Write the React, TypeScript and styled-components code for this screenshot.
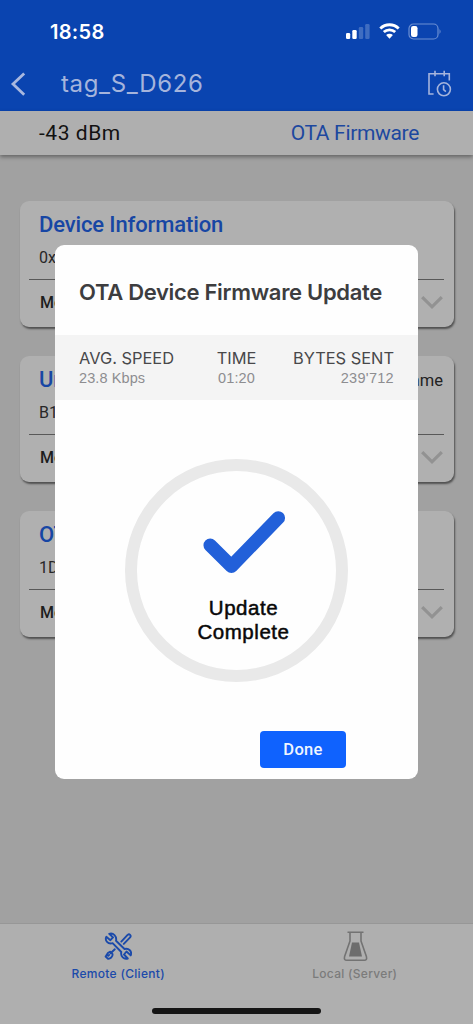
import React from 'react';
import styled, { createGlobalStyle } from 'styled-components';

const GlobalStyle = createGlobalStyle`
  *, *::before, *::after { box-sizing: border-box; }
  body { margin: 0; background: #a1a1a1; }
  svg { display: block; flex: none; }
`;

const sf = `Inter, "Liberation Sans", sans-serif`;
const roboto = `Roboto, "Liberation Sans", sans-serif`;
const helvetica = `"Liberation Sans", Arial, sans-serif`;

const Screen = styled.div`
  position: relative;
  display: flex;
  flex-direction: column;
  width: 473px;
  height: 1024px;
  overflow: hidden;
  background: #a1a1a1;
  font-family: ${roboto};
  white-space: nowrap;
`;

const Header = styled.header`
  height: 111px;
  flex: none;
  background: #0a44b0;
`;

const StatusBar = styled.div`
  display: flex;
  align-items: center;
  height: 62px;
  padding: 0 31px 0 50px;
`;

const Clock = styled.span`
  flex: 1;
  padding-top: 1px;
  font: 600 20px/24px ${sf};
  letter-spacing: 0.3px;
  color: #fff;
`;

const NavBar = styled.div`
  display: flex;
  align-items: center;
  height: 44px;
  padding: 0 21px 0 10px;
`;

const NavTitle = styled.h1`
  flex: 1;
  margin: 0 0 0 34px;
  font: 400 24px/30px ${sf};
  letter-spacing: 0.65px;
  color: #a5b4dc;
`;

const SubBar = styled.div`
  display: flex;
  align-items: center;
  justify-content: space-between;
  flex: none;
  height: 44px;
  padding: 0 54px 0 39px;
  background: #afafaf;
  box-shadow: 0 2px 4px rgba(0, 0, 0, 0.38);
`;

const SubText = styled.span<{ $link?: boolean }>`
  font-size: 21px;
  line-height: 26px;
  letter-spacing: ${p => (p.$link ? '-0.33px' : '0.55px')};
  color: ${p => (p.$link ? '#1d489f' : '#121212')};
`;

const Content = styled.main`
  display: flex;
  flex-direction: column;
  gap: 29px;
  flex: 1;
  padding: 46px 19px 0 20px;
`;

const Card = styled.section`
  display: flex;
  flex-direction: column;
  height: 126px;
  padding: 0 10px 0 9px;
  border-radius: 9px;
  background: #b0b0b0;
  box-shadow: 1px 2px 2px rgba(0, 0, 0, 0.5);
`;

const CardTop = styled.div`
  display: flex;
  justify-content: space-between;
  align-items: center;
  height: 47px;
  padding-left: 10px;
`;

const CardTitle = styled.h2`
  margin: 0;
  padding-top: 1px;
  font: 500 22px/26px ${roboto};
  letter-spacing: -0.13px;
  color: #1746a4;
`;

const CardNote = styled.span`
  font-size: 16.5px;
  line-height: 20px;
  padding: 3px 1px 0 0;
  color: #222;
`;

const CardDetail = styled.div`
  height: 32px;
  padding: 0 0 0 10px;
  border-bottom: 1px solid #585858;
  font-size: 16px;
  line-height: 20px;
  color: #272727;
`;

const CardMore = styled.div`
  display: flex;
  justify-content: space-between;
  align-items: center;
  height: 44px;
  padding: 0 1px 0 11px;
  font-size: 16px;
  font-weight: 500;
  color: #1d1d1d;
`;

const TabBar = styled.nav`
  display: flex;
  flex: none;
  height: 101px;
  border-top: 1px solid #979797;
  background: #afafaf;
`;

const Tab = styled.div<{ $active?: boolean }>`
  display: flex;
  flex-direction: column;
  align-items: center;
  gap: 5px;
  flex: 1;
  padding-top: 7px;
  font: 500 12px/16px ${sf};
  letter-spacing: 0.3px;
  color: ${p => (p.$active ? '#1b4aaa' : '#7b7b7b')};
`;

const HomeIndicator = styled.div`
  position: absolute;
  left: 152px;
  bottom: 10px;
  width: 169px;
  height: 6px;
  border-radius: 3px;
  background: #151515;
`;

const Dialog = styled.div`
  position: absolute;
  left: 55px;
  top: 245px;
  display: flex;
  flex-direction: column;
  width: 363px;
  height: 534px;
  border-radius: 9px;
  overflow: hidden;
  background: #fefefe;
`;

const DialogTitle = styled.h2`
  margin: 0;
  padding: 32px 0 28px 24px;
  font: 600 22px/30px ${sf};
  letter-spacing: -0.31px;
  color: #3d3d3f;
`;

const Stats = styled.div`
  display: flex;
  height: 65px;
  flex: none;
  padding: 13px 24px 0;
  background: #f4f4f4;
`;

const Stat = styled.div<{ $align: string }>`
  flex: 1;
  text-align: ${p => p.$align};
`;

const StatLabel = styled.div`
  font: 400 16.4px/20px ${sf};
  color: #48484a;
`;

const StatValue = styled.div<{ $spacing?: number }>`
  font: 400 14.5px/20px ${helvetica};
  letter-spacing: ${p => p.$spacing ?? 0.1}px;
  color: #8d8d90;
`;

const Ring = styled.div`
  display: flex;
  flex-direction: column;
  align-items: center;
  width: 223px;
  height: 223px;
  margin: 59px 0 0 70px;
  padding: 37px 0 0 14px;
  border: 12px solid #e9e9e9;
  border-radius: 50%;
`;

const Message = styled.p`
  margin: 22px 0 0;
  font: 400 20.5px/24px ${helvetica};
  letter-spacing: 0.55px;
  text-align: center;
  color: #080808;
  -webkit-text-stroke: 0.5px #080808;
`;

const DoneButton = styled.button`
  width: 86px;
  height: 37px;
  margin: 49px 0 0 205px;
  padding: 0;
  border: 0;
  border-radius: 4px;
  background: #0f62fe;
  font: 500 16.5px/20px ${roboto};
  letter-spacing: 0.3px;
  color: #f0f6ff;
`;

const SignalIcon = () => (
  <svg width="25" height="16" viewBox="0 0 25 16" fill="#fff">
    <rect x="0" y="10" width="4.2" height="6" rx="1.2" />
    <rect x="6.3" y="7" width="4.4" height="9" rx="1.2" />
    <rect x="12.8" y="4" width="4.4" height="12" rx="1.2" opacity=".22" />
    <rect x="19.2" y="1" width="4.4" height="15" rx="1.2" opacity=".22" />
  </svg>
);

const WifiIcon = () => (
  <svg width="21" height="16" viewBox="0 0 21 16" fill="none" stroke="#fff" strokeWidth="2.8">
    <path d="M1.3 5.5a13.2 13.2 0 0 1 18.4 0M4.8 9.1a8.2 8.2 0 0 1 11.4 0" />
    <path d="M7.1 12.1a4.9 4.9 0 0 1 6.8 0L10.5 15.7Z" fill="#fff" stroke="none" />
  </svg>
);

const BatteryIcon = () => (
  <svg width="34" height="17" viewBox="0 0 34 17">
    <rect x="1" y="1" width="29" height="15" rx="4.5" fill="none" stroke="#6c8fd2" strokeWidth="1.2" />
    <rect x="3" y="3" width="6.5" height="11" rx="2.2" fill="#fff" />
    <path d="M31.5 6v5q2.2-2.5 0-5" fill="#6c8fd2" />
  </svg>
);

const StatusIcons = styled.div`
  display: flex;
  align-items: center;
  gap: 8px;
`;

const BackIcon = () => (
  <svg width="17" height="26" viewBox="0 0 17 26" fill="none" stroke="#a9b8df" strokeWidth="2.8">
    <path d="M14.2 2.5 3 13l11.2 10.7" />
  </svg>
);

const ScheduleIcon = () => (
  <svg width="25" height="28" viewBox="0 0 25 28" fill="none" stroke="#a5b4dc" strokeWidth="1.6">
    <path d="M6.6 24H2V3.8h20.3v6.6M8 .8v5.4M17.2.8v5.4" />
    <circle cx="16.9" cy="19.3" r="6.5" />
    <path d="M16.6 15.3v4.4l2.3 2" />
  </svg>
);

const ChevronIcon = () => (
  <svg width="22" height="16" viewBox="0 0 22 16" fill="none" stroke="#929292" strokeWidth="3.2">
    <path d="m1.2 3.2 9.8 9.6 9.8-9.6" />
  </svg>
);

const CheckIcon = () => (
  <svg width="84" height="66" viewBox="0 0 84 66" fill="none" stroke="#2260d9" strokeWidth="13.5" strokeLinecap="round" strokeLinejoin="round">
    <path d="M8.2 37.3 29.4 58.3 76.3 9.9" />
  </svg>
);

const ToolsIcon = () => (
  <svg width="28" height="30" viewBox="0 0 28 30" fill="none" stroke="#1b4aaa" strokeWidth="1.9" strokeLinejoin="round" strokeLinecap="round">
    <path d="M5.2 2.8 9 6.4 6.4 9.2 2.3 5.8C.6 9.5 3.8 13.4 8.6 12.2L17.3 21c-1 4.5 2.7 7.8 6.5 6.5l-3.8-4 2.5-3 4.2 3.9c1.6-4-1.9-7.6-6.2-6.4L12 9.8C13 5.1 9.3 1.5 5.2 2.8Z" />
    <path d="m17.3 10.6 6.3-6.7c1.9-1.5 4 .6 2.5 2.5l-6.3 6.5M10.8 18.3l-4.2 4" />
    <path d="m6.2 20.7 2.4 2.4c.2 2.6-2.3 5-4.8 4.6L1.6 25.5c1-.6.7-3.5 4.6-4.8ZM4.2 24.8l1-.9" />
  </svg>
);

const FlaskIcon = () => (
  <svg width="26" height="30" viewBox="0 0 26 30" fill="none" stroke="#737373" strokeWidth="1.6" strokeLinejoin="round">
    <path d="M5.5 1.2h16M8 1.2v8.7L2.6 25.6q-1 3.6 2.2 3.6h17.4q3.2 0 2.2-3.6L19 9.9V1.2" />
    <path d="M10 11.6h7L20 25.4H7Z" fill="#6d6d6d" stroke="none" />
  </svg>
);

const cards = [
  { title: 'Device Information', detail: '0x180A', note: '' },
  { title: 'Unknown Service', detail: 'B1E0', note: 'Rename' },
  { title: 'OTA Service', detail: '1D14', note: '' },
];

export default function App() {
  return (
    <Screen>
      <GlobalStyle />
      <Header>
        <StatusBar>
          <Clock>18:58</Clock>
          <StatusIcons>
            <SignalIcon />
            <WifiIcon />
            <BatteryIcon />
          </StatusIcons>
        </StatusBar>
        <NavBar>
          <BackIcon />
          <NavTitle>tag_S_D626</NavTitle>
          <ScheduleIcon />
        </NavBar>
      </Header>
      <SubBar>
        <SubText>-43 dBm</SubText>
        <SubText $link>OTA Firmware</SubText>
      </SubBar>
      <Content>
        {cards.map(card => (
          <Card key={card.title}>
            <CardTop>
              <CardTitle>{card.title}</CardTitle>
              {card.note && <CardNote>{card.note}</CardNote>}
            </CardTop>
            <CardDetail>{card.detail}</CardDetail>
            <CardMore>
              <span>More Info</span>
              <ChevronIcon />
            </CardMore>
          </Card>
        ))}
      </Content>
      <TabBar>
        <Tab $active>
          <ToolsIcon />
          Remote (Client)
        </Tab>
        <Tab>
          <FlaskIcon />
          Local (Server)
        </Tab>
      </TabBar>
      <Dialog role="dialog">
        <DialogTitle>OTA Device Firmware Update</DialogTitle>
        <Stats>
          <Stat $align="left">
            <StatLabel>AVG. SPEED</StatLabel>
            <StatValue>23.8 Kbps</StatValue>
          </Stat>
          <Stat $align="center">
            <StatLabel>TIME</StatLabel>
            <StatValue>01:20</StatValue>
          </Stat>
          <Stat $align="right">
            <StatLabel>BYTES SENT</StatLabel>
            <StatValue $spacing={0.3}>239'712</StatValue>
          </Stat>
        </Stats>
        <Ring>
          <CheckIcon />
          <Message>
            Update
            <br />
            Complete
          </Message>
        </Ring>
        <DoneButton>Done</DoneButton>
      </Dialog>
      <HomeIndicator />
    </Screen>
  );
}
